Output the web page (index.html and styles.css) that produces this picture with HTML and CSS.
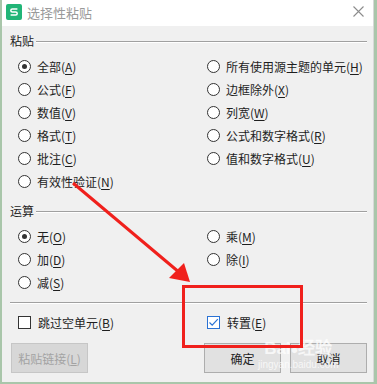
FILE: index.html
```html
<!DOCTYPE html>
<html lang="zh-CN">
<head>
<meta charset="UTF-8">
<title>选择性粘贴</title>
<link rel="stylesheet" href="styles.css">
</head>
<body>
<div class="dialog">
    <div class="titlebar">
        <svg class="logo" width="16" height="16" viewBox="0 0 16 16">
            <rect width="16" height="16" rx="2" fill="#21b577"/>
            <path d="M11.4 5H6.3A1.5 1.5 0 0 0 6.3 8H9.7A1.5 1.5 0 0 1 9.7 11H4.6" fill="none" stroke="#fff" stroke-width="1.5"/>
        </svg>
        <span class="title">选择性粘贴</span>
        <svg class="close" width="11" height="11" viewBox="0 0 11 11">
            <path d="M0.5 0.5L10.5 10.5M10.5 0.5L0.5 10.5" stroke="#8c8c8c" stroke-width="1.1"/>
        </svg>
    </div>
    <div class="content">
        <div class="group-title"><span>粘贴</span></div>
        <div class="options">
            <div class="opt"><i class="radio on"></i>全部(<u>A</u>)</div>
            <div class="opt"><i class="radio"></i>所有使用源主题的单元(<u>H</u>)</div>
            <div class="opt"><i class="radio"></i>公式(<u>F</u>)</div>
            <div class="opt"><i class="radio"></i>边框除外(<u>X</u>)</div>
            <div class="opt"><i class="radio"></i>数值(<u>V</u>)</div>
            <div class="opt"><i class="radio"></i>列宽(<u>W</u>)</div>
            <div class="opt"><i class="radio"></i>格式(<u>T</u>)</div>
            <div class="opt"><i class="radio"></i>公式和数字格式(<u>R</u>)</div>
            <div class="opt"><i class="radio"></i>批注(<u>C</u>)</div>
            <div class="opt"><i class="radio"></i>值和数字格式(<u>U</u>)</div>
            <div class="opt"><i class="radio"></i>有效性验证(<u>N</u>)</div>
        </div>
        <div class="group-title second"><span>运算</span></div>
        <div class="options">
            <div class="opt"><i class="radio on"></i>无(<u>O</u>)</div>
            <div class="opt"><i class="radio"></i>乘(<u>M</u>)</div>
            <div class="opt"><i class="radio"></i>加(<u>D</u>)</div>
            <div class="opt"><i class="radio"></i>除(<u>I</u>)</div>
            <div class="opt"><i class="radio"></i>减(<u>S</u>)</div>
        </div>
        <div class="separator"></div>
        <div class="options checks">
            <div class="opt"><i class="check"></i>跳过空单元(<u>B</u>)</div>
            <div class="opt"><i class="check on">
                <svg width="11" height="11" viewBox="0 0 11 11"><path d="M1.5 5.5L4.2 8.2L9.8 2.2" fill="none" stroke="#2a72d4" stroke-width="1.2"/></svg>
            </i>转置(<u>E</u>)</div>
        </div>
        <div class="buttons">
            <button class="btn disabled">粘贴链接(<u>L</u>)</button>
            <div class="right-buttons">
                <button class="btn">确定</button>
                <button class="btn">取消</button>
            </div>
        </div>
    </div>
</div>

<div class="watermark">
    <div class="wm-big">Bai<span class="paw">●</span>经验</div>
    <div class="wm-small">jingyan.baidu.com</div>
</div>

<svg class="annotation" width="377" height="384" viewBox="0 0 377 384">
    <line x1="73" y1="183" x2="180" y2="273" stroke="#f0201c" stroke-width="3"/>
    <polygon points="190,282 184,263 169,278" fill="#f0201c"/>
    <rect x="183.5" y="286.5" width="118" height="60" fill="none" stroke="#f0201c" stroke-width="3"/>
</svg>
</body>
</html>
```

FILE: styles.css
```css
body {
    margin: 0;
    width: 377px;
    height: 384px;
    background-color: #a9c6aa;
    font-family: "Noto Sans CJK SC", "Noto Sans", sans-serif;
    font-size: 12px;
    color: #1e1e1e;
    position: relative;
    overflow: hidden;
}
.dialog {
    margin-left: 2px;
    width: 371px;
    height: 382px;
    background-color: #f0f0f0;
    box-shadow: 1px 0 0 #d8d8d8;
}
.titlebar {
    height: 26px;
    background-color: #fff;
    display: flex;
    align-items: center;
    padding: 0 9px 0 4px;
}
.titlebar .logo {
    margin-top: -2px;
}
.titlebar .title {
    margin-left: 5px;
    color: #9a9a9a;
    font-size: 13px;
    flex: 1;
    margin-top: -2px;
}
.titlebar .close {
    margin-top: -3px;
}
.content {
    padding: 8px 6px 9px 8px;
}
.group-title {
    height: 14px;
    display: flex;
    align-items: center;
    line-height: 14px;
}
.group-title::after {
    content: "";
    flex: 1;
    height: 1px;
    margin-left: 2px;
    background-color: #a0a0a0;
    box-shadow: 0 1px 0 #fff;
}
.group-title.second {
    margin-top: 11px;
}
.options {
    display: grid;
    grid-template-columns: 189px 1fr;
    padding-left: 8px;
    margin-top: 7px;
}
.opt {
    height: 23px;
    display: flex;
    align-items: center;
    white-space: nowrap;
}
.opt u {
    text-decoration-thickness: 1px;
    text-underline-offset: 2px;
}
.radio {
    width: 11px;
    height: 11px;
    border: 1px solid #333;
    border-radius: 50%;
    background-color: #fff;
    margin-right: 6px;
    display: flex;
    align-items: center;
    justify-content: center;
}
.radio.on::after {
    content: "";
    width: 5px;
    height: 5px;
    border-radius: 50%;
    background-color: #333;
}
.separator {
    height: 1px;
    background-color: #a0a0a0;
    box-shadow: 0 1px 0 #fff;
    margin-top: 8px;
}
.checks {
    margin-top: 8px;
}
.check {
    width: 11px;
    height: 11px;
    border: 1px solid #333;
    background-color: #fff;
    margin-right: 7px;
    display: flex;
    align-items: center;
    justify-content: center;
}
.check.on {
    border-color: #2a72d4;
}
.buttons {
    display: flex;
    justify-content: space-between;
    margin-top: 9px;
    padding-left: 1px;
}
.right-buttons {
    display: flex;
    gap: 9px;
}
.btn {
    width: 77px;
    height: 30px;
    font-family: inherit;
    font-size: 12px;
    color: #1e1e1e;
    background-color: #e1e1e1;
    border: 1px solid #adadad;
    padding: 0;
}
.btn.disabled {
    color: #a3a3a3;
    background-color: #d7d7d7;
    border-color: #c6c6c6;
}
.watermark {
    position: absolute;
    left: 258px;
    top: 340px;
    color: rgba(255, 255, 255, 0.75);
    text-align: center;
}
.wm-big {
    font-family: "Liberation Sans", sans-serif;
    font-weight: bold;
    font-size: 17px;
    line-height: 18px;
}
.wm-big .paw {
    font-size: 13px;
}
.wm-small {
    font-family: "Liberation Sans", sans-serif;
    font-size: 10px;
    line-height: 12px;
}
.annotation {
    position: absolute;
    left: 0;
    top: 0;
}
```
